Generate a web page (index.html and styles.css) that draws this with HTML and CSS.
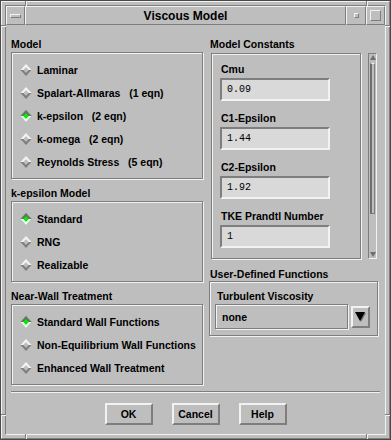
FILE: index.html
```html
<!DOCTYPE html>
<html lang="en">
<head>
  <meta charset="UTF-8">
  <meta name="viewport" content="width=device-width, initial-scale=1.0">
  <title>Viscous Model</title>
  <link rel="stylesheet" href="styles.css">
</head>
<body>
  <div class="window">
    <div class="frame">
      <div class="client">
        <div class="titlebar">
          <div class="tb tb-menu"><span class="menu-bar"></span></div>
          <div class="tb tb-title">Viscous Model</div>
          <div class="tb tb-min"><span class="min-box"></span></div>
          <div class="tb tb-max"><span class="max-box"></span></div>
        </div>

        <div class="dialog">
          <div class="columns">
            <div class="col-left">
              <div class="group">
                <div class="label">Model</div>
                <div class="box radios">
                  <div class="radio"><span class="dia"></span>Laminar</div>
                  <div class="radio"><span class="dia"></span>Spalart-Allmaras   (1 eqn)</div>
                  <div class="radio"><span class="dia on"></span>k-epsilon   (2 eqn)</div>
                  <div class="radio"><span class="dia"></span>k-omega   (2 eqn)</div>
                  <div class="radio"><span class="dia"></span>Reynolds Stress   (5 eqn)</div>
                </div>
              </div>

              <div class="group">
                <div class="label">k-epsilon Model</div>
                <div class="box radios">
                  <div class="radio"><span class="dia on"></span>Standard</div>
                  <div class="radio"><span class="dia"></span>RNG</div>
                  <div class="radio"><span class="dia"></span>Realizable</div>
                </div>
              </div>

              <div class="group">
                <div class="label">Near-Wall Treatment</div>
                <div class="box radios">
                  <div class="radio"><span class="dia on"></span>Standard Wall Functions</div>
                  <div class="radio"><span class="dia"></span>Non-Equilibrium Wall Functions</div>
                  <div class="radio"><span class="dia"></span>Enhanced Wall Treatment</div>
                </div>
              </div>
            </div>

            <div class="col-right">
              <div class="label label-right">Model Constants</div>
              <div class="scroll-row">
                <div class="box constants">
                  <div class="const">
                    <div class="label">Cmu</div>
                    <div class="field">0.09</div>
                  </div>
                  <div class="const">
                    <div class="label">C1-Epsilon</div>
                    <div class="field">1.44</div>
                  </div>
                  <div class="const">
                    <div class="label">C2-Epsilon</div>
                    <div class="field">1.92</div>
                  </div>
                  <div class="const">
                    <div class="label">TKE Prandtl Number</div>
                    <div class="field">1</div>
                  </div>
                </div>
                <div class="scrollbar">
                  <span class="arrow arrow-up"></span>
                  <span class="thumb"></span>
                  <span class="arrow arrow-down"></span>
                </div>
              </div>

              <div class="label label-udf">User-Defined Functions</div>
              <div class="box udf">
                <div class="label">Turbulent Viscosity</div>
                <div class="option-row">
                  <div class="option">none</div>
                  <div class="drop">
                    <svg width="11" height="11" viewBox="0 0 11 11">
                      <polygon points="1,2 11,2 6,11" fill="#6e6e6e"/>
                      <polygon points="0,1 10,1 5,10" fill="#000"/>
                    </svg>
                  </div>
                </div>
              </div>
            </div>
          </div>

          <div class="separator"></div>

          <div class="buttons">
            <div class="btn">OK</div>
            <div class="btn">Cancel</div>
            <div class="btn">Help</div>
          </div>
        </div>
      </div>
    </div>

    <!-- resize corner marks of the window frame -->
    <span class="mark mark-v" style="left: 24px; top: 0;"></span>
    <span class="mark mark-v" style="left: 365px; top: 0;"></span>
    <span class="mark mark-v" style="left: 24px; bottom: 0;"></span>
    <span class="mark mark-v" style="left: 365px; bottom: 0;"></span>
    <span class="mark mark-h" style="top: 24px; left: 0;"></span>
    <span class="mark mark-h" style="top: 24px; right: 0;"></span>
    <span class="mark mark-h" style="top: 413px; left: 0;"></span>
    <span class="mark mark-h" style="top: 413px; right: 0;"></span>
  </div>
</body>
</html>
```

FILE: styles.css
```css
body {
  margin: 0;
  background-color: #bebebe;
  color: #000;
  font-family: "Liberation Sans", Arial, sans-serif;
  font-size: 10.5px;
  font-weight: bold;
}

.window {
  position: relative;
  width: 391px;
  height: 440px;
  box-sizing: border-box;
  border: 1px solid #4a4a4a;
  background-color: #bebebe;
}

.frame {
  height: 100%;
  box-sizing: border-box;
  border: 1px solid;
  border-color: #f2f2f2 #7e7e7e #7e7e7e #f2f2f2;
  padding: 3px;
}

.client {
  height: 100%;
  box-sizing: border-box;
  border: 1px solid;
  border-color: #7e7e7e #f2f2f2 #f2f2f2 #7e7e7e;
  display: flex;
  flex-direction: column;
}

/* title bar */
.titlebar {
  display: flex;
  height: 19px;
}

.tb {
  box-sizing: border-box;
  border: 1px solid;
  border-color: #f2f2f2 #7e7e7e #7e7e7e #f2f2f2;
  display: flex;
  align-items: center;
  justify-content: center;
}

.tb-menu { width: 19px; }
.tb-title { flex: 1; font-size: 12px; }
.tb-min { width: 20px; }
.tb-max { width: 19px; }

.menu-bar,
.min-box,
.max-box {
  box-sizing: border-box;
  border: 1px solid;
  border-color: #f2f2f2 #7e7e7e #7e7e7e #f2f2f2;
}

.menu-bar { width: 11px; height: 4px; }
.min-box { width: 5px; height: 5px; }
.max-box { width: 11px; height: 11px; }

.mark {
  position: absolute;
  box-sizing: border-box;
}

.mark-v {
  width: 2px;
  height: 5px;
  border-left: 1px solid #7e7e7e;
  border-right: 1px solid #f2f2f2;
}

.mark-h {
  width: 5px;
  height: 2px;
  border-top: 1px solid #7e7e7e;
  border-bottom: 1px solid #f2f2f2;
}

/* dialog body */
.dialog {
  flex: 1;
  display: flex;
  flex-direction: column;
  padding: 12px 5px 0 5px;
}

.columns {
  display: flex;
  gap: 7px;
}

.col-left {
  width: 192px;
}

.col-right {
  width: 169px;
}

.label {
  height: 14px;
  line-height: 14px;
  white-space: nowrap;
}

.group + .group {
  margin-top: 7px;
}

.group .label {
  margin-bottom: 1px;
}

.box {
  box-sizing: border-box;
  border: 1px solid #7e7e7e;
  box-shadow: inset 1px 1px 0 #f2f2f2, 1px 1px 0 #f2f2f2;
}

.radios {
  padding: 5px 0;
}

.radio {
  height: 23px;
  display: flex;
  align-items: center;
  padding-left: 10px;
  white-space: pre;
}

.dia {
  width: 8px;
  height: 8px;
  box-sizing: border-box;
  border: 2px solid;
  border-color: #f4f4f4 #7e7e7e #7e7e7e #f4f4f4;
  background-color: #bebebe;
  transform: rotate(45deg);
  margin-right: 7px;
  flex-shrink: 0;
}

.dia.on {
  border-color: #6e6e6e #f4f4f4 #f4f4f4 #6e6e6e;
  background-color: #00ee00;
}

/* model constants */
.label-right {
  margin-bottom: 2px;
}

.scroll-row {
  display: flex;
  gap: 7px;
}

.constants {
  width: 150px;
  height: 206px;
  margin-left: 1px;
  padding: 8px 0 0 8px;
  overflow: hidden;
}

.const + .const {
  margin-top: 10px;
}

.const .label {
  padding-left: 1px;
}

.field {
  width: 110px;
  height: 23px;
  margin-top: 2px;
  box-sizing: border-box;
  border: 2px solid;
  border-color: #7e7e7e #f2f2f2 #f2f2f2 #7e7e7e;
  background-color: #d9d9d9;
  padding-left: 5px;
  display: flex;
  align-items: center;
  font-family: "Liberation Mono", "Courier New", monospace;
  font-weight: normal;
  font-size: 10px;
}

.scrollbar {
  width: 9px;
  height: 206px;
  box-sizing: border-box;
  border: 1px solid;
  border-color: #7e7e7e #f2f2f2 #f2f2f2 #7e7e7e;
  display: flex;
  flex-direction: column;
  align-items: center;
  padding: 1px 0;
}

.arrow {
  width: 0;
  height: 0;
  border-left: 3px solid transparent;
  border-right: 3px solid transparent;
}

.arrow-up {
  border-bottom: 5px solid #6e6e6e;
  margin-bottom: 3px;
}

.arrow-down {
  border-top: 5px solid #6e6e6e;
  margin-top: auto;
}

.thumb {
  width: 5px;
  height: 151px;
  box-sizing: border-box;
  border: 1px solid;
  border-color: #f2f2f2 #7e7e7e #7e7e7e #6e6e6e;
  border-left-width: 2px;
}

/* user-defined functions */
.label-udf {
  margin-top: 8px;
}

.udf {
  width: 169px;
  height: 55px;
  margin-left: -1px;
  padding: 7px 0 0 5px;
}

.udf .label {
  padding-left: 2px;
}

.option-row {
  display: flex;
  align-items: center;
  gap: 3px;
  margin-top: 1px;
}

.option {
  width: 133px;
  height: 25px;
  box-sizing: border-box;
  border: 1px solid #7e7e7e;
  box-shadow: inset 1px 1px 0 #f2f2f2, 1px 1px 0 #f2f2f2;
  padding-left: 6px;
  display: flex;
  align-items: center;
}

.drop {
  width: 19px;
  height: 22px;
  box-sizing: border-box;
  border: 2px solid;
  border-color: #f2f2f2 #7e7e7e #7e7e7e #f2f2f2;
  display: flex;
  align-items: center;
  justify-content: center;
}

/* bottom buttons */
.separator {
  margin-top: 6px;
  border-top: 1px solid #7e7e7e;
  border-bottom: 1px solid #f2f2f2;
}

.buttons {
  display: flex;
  justify-content: center;
  gap: 19px;
  margin-top: 10px;
}

.btn {
  width: 48px;
  height: 22px;
  box-sizing: border-box;
  border: 2px solid;
  border-color: #f2f2f2 #7e7e7e #7e7e7e #f2f2f2;
  display: flex;
  align-items: center;
  justify-content: center;
}
```
